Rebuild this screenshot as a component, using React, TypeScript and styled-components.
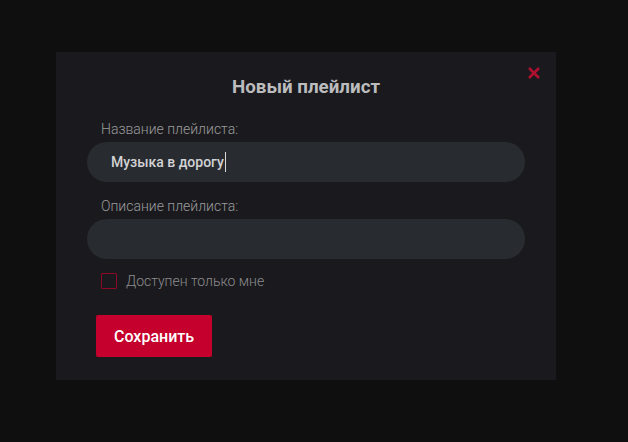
import styled, { createGlobalStyle } from "styled-components";

const GlobalStyle = createGlobalStyle`
  html, body {
    margin: 0;
    padding: 0;
    background: #0f0f10;
  }
  body {
    font-family: Roboto, "Noto Sans", sans-serif;
  }
`;

const Page = styled.div`
  width: 628px;
  height: 442px;
  padding: 52px 0 0 56px;
  box-sizing: border-box;
  background: #0f0f10;
`;

const Modal = styled.div`
  position: relative;
  width: 500px;
  box-sizing: border-box;
  padding: 24px 31px 23px;
  background: #1a1a1e;
  display: flex;
  flex-direction: column;
`;

const Close = styled.button`
  position: absolute;
  top: 14px;
  right: 15px;
  width: 14px;
  height: 14px;
  padding: 0;
  border: 0;
  background: none;
  cursor: pointer;
  display: flex;
`;

const Title = styled.h2`
  margin: 0 0 23px;
  text-align: center;
  font-size: 18.8px;
  line-height: 22px;
  font-weight: 700;
  color: #bcbcbe;
`;

const Label = styled.label<{ $gap?: number }>`
  margin: ${(p) => p.$gap ?? 0}px 0 5px 14px;
  font-size: 14px;
  line-height: 16px;
  font-weight: 300;
  color: #9b9b9d;
`;

const Field = styled.div`
  height: 40px;
  border-radius: 20px;
  background: #282b30;
  padding: 0 24px;
  display: flex;
  align-items: center;
  font-size: 14px;
  font-weight: 500;
  color: #d2d2d4;
`;

const Caret = styled.span`
  display: inline-block;
  width: 1px;
  height: 20px;
  margin-left: 1px;
  background: #d8d8d8;
`;

const CheckRow = styled.label`
  margin: 14px 0 0 14px;
  display: flex;
  align-items: center;
  gap: 9px;
  font-size: 14px;
  font-weight: 300;
  color: #8c8c8e;
`;

const Box = styled.span`
  width: 16px;
  height: 16px;
  box-sizing: border-box;
  border: 1px solid #8c0a28;
  border-radius: 1px;
`;

const SaveButton = styled.button`
  align-self: flex-start;
  margin: 26px 0 0 9px;
  height: 42px;
  padding: 0 18px;
  border: 0;
  border-radius: 2px;
  background: #c5002d;
  color: #ffffff;
  font-family: Roboto, "Noto Sans", sans-serif;
  font-size: 16px;
  font-weight: 500;
  cursor: pointer;
`;

const App = () => {
  return (
    <Page>
      <GlobalStyle />
      <Modal>
        <Close aria-label="close">
          <svg width="14" height="14" viewBox="0 0 14 14">
            <path
              d="M2 2 L12 12 M12 2 L2 12"
              stroke="#b0102f"
              strokeWidth="2.6"
              strokeLinecap="butt"
            />
          </svg>
        </Close>
        <Title>Новый плейлист</Title>
        <Label>Название плейлиста:</Label>
        <Field>
          Музыка в дорогу
          <Caret />
        </Field>
        <Label $gap={16}>Описание плейлиста:</Label>
        <Field />
        <CheckRow>
          <Box />
          Доступен только мне
        </CheckRow>
        <SaveButton>Сохранить</SaveButton>
      </Modal>
    </Page>
  );
};

export default App;
